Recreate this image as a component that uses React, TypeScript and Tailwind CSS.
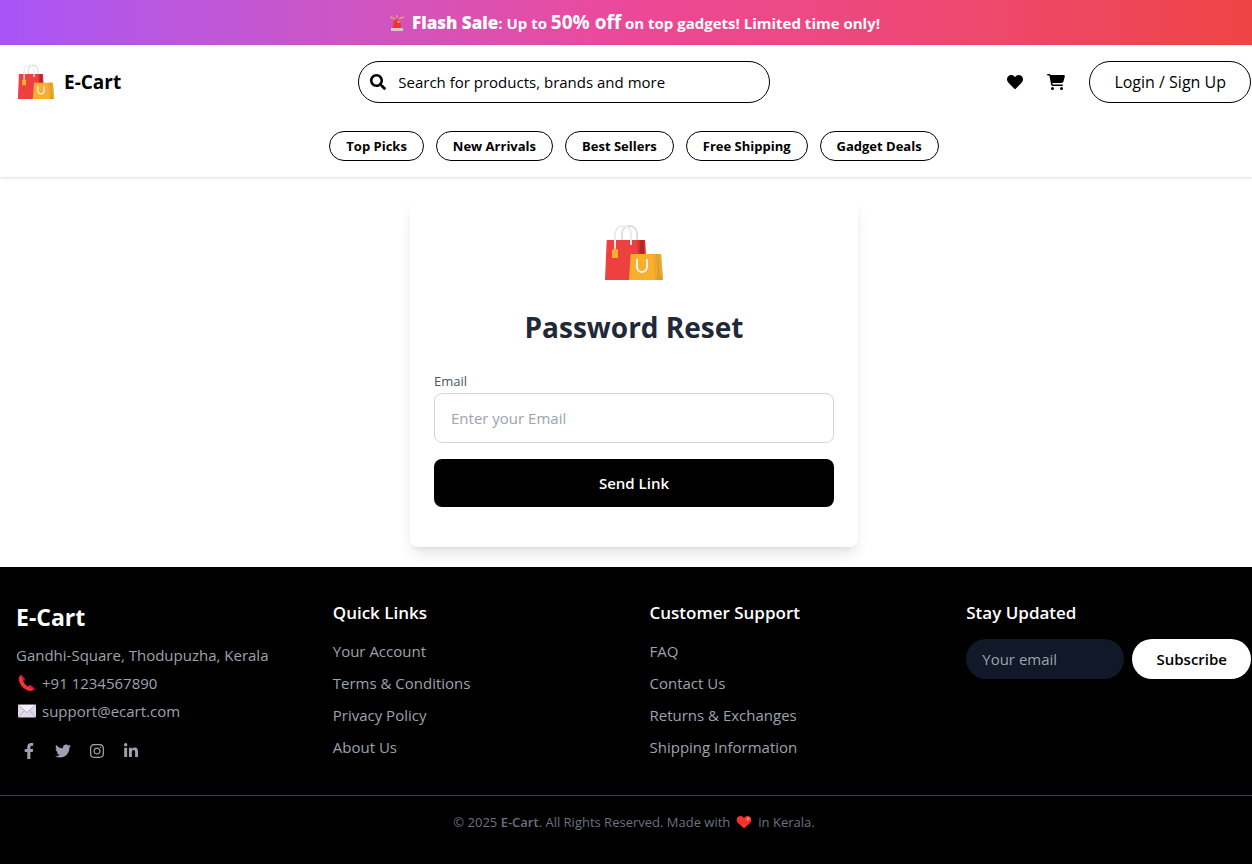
import type { ReactNode } from "react";
import { FaFacebookF, FaHeart, FaInstagram, FaLinkedinIn, FaSearch, FaTwitter } from "react-icons/fa";
import { FaCartShopping } from "react-icons/fa6";

function BagLogo({ className }: { className: string }) {
  return (
    <svg viewBox="0 0 64 64" className={className} role="img" aria-label="E-Cart shopping bags" fill="none">
      <path d="M20 19v-6.500a7.500 7.500 0 0 1 15 0V19" stroke="#dadcde" strokeWidth="1.800" />
      <path d="M4.700 19H43L45 59H3z" fill="#ee413f" />
      <path d="M35.500 19H43L43.700 34H36z" fill="#d63031" />
      <path d="M38.500 19H41.500L42 34H37.500z" fill="#b12a28" />
      <path d="M28.700 33H59L61 59H27z" fill="#f8af2e" />
      <path d="M51.500 33H59L61 59H53z" fill="#eba72e" />
      <path d="M54.500 33H56L58 54L61 59H53L56 54z" fill="#dc9d2c" />
      <path d="M13 28V12.500a8 7.500 0 0 1 16 0V24" stroke="#e8edf1" strokeWidth="2" />
      <path d="M13 27.200L16 29V37H10V29z" fill="#f8af2e" />
      <path d="M35 38V46a5 5 0 0 0 10 0V38" stroke="#f0f0f0" strokeWidth="2" />
    </svg>
  );
}

function SirenIcon() {
  return (
    <svg viewBox="0 0 18 18" className="mr-1.5 size-[18px]" aria-hidden="true">
      <path d="M9 1v3M5 3l1.500 2.500M13 3l-1.500 2.500M2.500 2.500l1.800 2M15.500 2.500l-1.800 2" stroke="#eeb05a" strokeWidth="1.200" />
      <path d="M4.500 14L5.800 7.800Q6.200 5.500 9 5.500T12.200 7.800L13.500 14z" fill="#f8312f" />
      <circle cx="10.500" cy="7.800" r="1" fill="#ffd5cf" />
      <rect x="3" y="14" width="12" height="3" rx=".5" fill="#d3c9ce" />
    </svg>
  );
}

function PhoneIcon() {
  return (
    <svg viewBox="0 0 18 18" className="size-[18px]" aria-hidden="true">
      <path d="M2 1.500Q.5 3 1 6.500Q2.500 13 9 16.300Q13.500 18 16.300 15.500L12 11.500L9.500 12.500Q6 10 5.200 7L6.500 5L3.500 1z" fill="#f8312f" />
      <path d="M3 .8L7 5L6.200 6.800L2.200 2.200zM12.200 10.500L17 14.800L15.800 16L10.800 12z" fill="#ca0b6a" />
    </svg>
  );
}

function EnvelopeIcon() {
  return (
    <svg viewBox="0 0 18 14" className="h-[14px] w-[18px]" aria-hidden="true">
      <rect y=".5" width="18" height="13" rx=".8" fill="#e1d8ec" />
      <path d="M0 1L9 8.500L18 1z" fill="#f3eef8" />
      <path d="M.3 1L9 8.500L17.700 1M.3 13L6.500 6.500M17.700 13L11.500 6.500" fill="none" stroke="#998ea4" strokeWidth=".6" />
    </svg>
  );
}

function HeartEmoji() {
  return (
    <svg viewBox="0 0 16 14" className="mx-1.5 inline h-[14px] w-4 align-[-2px]" aria-hidden="true">
      <path d="M8 13.500L2 8Q0 5.500 1 3Q2.300.8 5 1Q7 1.300 8 3Q9 1.300 11 1Q13.700.8 15 3Q16 5.500 14 8z" fill="#f8312f" />
      <ellipse cx="12" cy="4" rx="1.300" ry="2" transform="rotate(25 12 4)" fill="#ff8a73" />
    </svg>
  );
}

const categories = ["Top Picks", "New Arrivals", "Best Sellers", "Free Shipping", "Gadget Deals"];
const quickLinks = ["Your Account", "Terms & Conditions", "Privacy Policy", "About Us"];
const supportLinks = ["FAQ", "Contact Us", "Returns & Exchanges", "Shipping Information"];
const socials: { name: string; icon: ReactNode }[] = [
  { name: "Facebook", icon: <FaFacebookF /> },
  { name: "Twitter", icon: <FaTwitter /> },
  { name: "Instagram", icon: <FaInstagram /> },
  { name: "LinkedIn", icon: <FaLinkedinIn /> },
];

function LinkColumn({ title, links }: { title: string; links: string[] }) {
  return (
    <nav aria-label={title}>
      <h2 className="mb-3 text-[17px] leading-7 font-semibold text-white">{title}</h2>
      <ul className="space-y-2">
        {links.map((link) => (
          <li key={link}>
            <a href="#">{link}</a>
          </li>
        ))}
      </ul>
    </nav>
  );
}

export default function App() {
  return (
    <div className="flex min-h-screen flex-col bg-white font-['Open_Sans','Noto_Sans',sans-serif] text-[15px] leading-6 text-black">
      <div className="flex h-[45px] items-center justify-center bg-linear-to-r from-[#a855f7] via-[#ec4899] to-[#ef4444] pl-4 font-bold text-white">
        <SirenIcon />
        <p>
          <strong className="text-[17px] font-extrabold">Flash Sale</strong>: Up to{" "}
          <strong className="text-[19px] font-bold">50% off</strong> on top gadgets! Limited time only!
        </p>
      </div>

      <header className="relative bg-white pb-4 shadow-sm">
        <div className="flex items-center justify-between py-4 pr-px pl-4">
          <a href="#" className="flex items-center gap-2 text-[19px] leading-7 font-bold">
            <BagLogo className="size-10" />
            E-Cart
          </a>
          <form role="search" className="flex h-[42px] w-[412px] items-center gap-3 rounded-full border border-black px-[11px]">
            <FaSearch className="size-4 shrink-0" />
            <input
              type="search"
              aria-label="Search products"
              placeholder="Search for products, brands and more"
              className="min-w-0 flex-1 bg-transparent outline-none placeholder:text-black"
            />
          </form>
          <div className="flex items-center">
            <a href="#" aria-label="Wishlist" className="mr-6">
              <FaHeart className="size-4" />
            </a>
            <a href="#" aria-label="Cart" className="mr-6">
              <FaCartShopping className="h-4 w-[18px]" />
            </a>
            <a href="#" className="flex h-[42px] items-center rounded-full border border-black px-6 text-base font-medium">
              Login / Sign Up
            </a>
          </div>
        </div>
        <nav aria-label="Categories" className="mt-3 flex justify-center gap-3 pl-4">
          {categories.map((category) => (
            <a
              key={category}
              href="#"
              className="flex h-[30px] items-center rounded-full border border-black px-4 text-[13px] leading-5 font-bold"
            >
              {category}
            </a>
          ))}
        </nav>
      </header>

      <main className="flex justify-center py-5 pl-4">
        <section className="w-full max-w-md rounded-lg bg-white px-6 pt-6 pb-10 shadow-lg">
          <BagLogo className="mx-auto size-16" />
          <h1 className="mt-6 mb-6 text-center text-[28px] leading-9 font-bold text-[#1f2937]">Password Reset</h1>
          <form>
            <label htmlFor="email" className="block text-[13px] leading-6 text-[#4b5563]">
              Email
            </label>
            <input
              id="email"
              type="email"
              placeholder="Enter your Email"
              className="mb-4 block h-[50px] w-full rounded-lg border border-[#d1d5db] px-4 outline-none placeholder:text-[#9ca3af]"
            />
            <button type="button" className="h-12 w-full rounded-lg bg-black font-semibold text-white">
              Send Link
            </button>
          </form>
        </section>
      </main>

      <footer className="flex-1 bg-black pt-8 text-[#9ca3af]">
        <div className="grid grid-cols-4 gap-8 pr-px pb-9 pl-4">
          <div>
            <h2 className="mb-2 text-[23px] leading-9 font-bold text-white">E-Cart</h2>
            <address className="space-y-1 not-italic">
              <p>Gandhi-Square, Thodupuzha, Kerala</p>
              <p className="flex items-center gap-1.5 pl-[2px]">
                <PhoneIcon />
                +91 1234567890
              </p>
              <p className="flex items-center gap-1.5 pl-[2px]">
                <EnvelopeIcon />
                support@ecart.com
              </p>
            </address>
            <div className="mt-5 flex gap-[18px] pl-[5px] text-base">
              {socials.map(({ name, icon }) => (
                <a key={name} href="#" aria-label={name}>
                  {icon}
                </a>
              ))}
            </div>
          </div>
          <LinkColumn title="Quick Links" links={quickLinks} />
          <LinkColumn title="Customer Support" links={supportLinks} />
          <div>
            <h2 className="mb-3 text-[17px] leading-7 font-semibold text-white">Stay Updated</h2>
            <form className="flex gap-2">
              <input
                type="email"
                aria-label="Your email"
                placeholder="Your email"
                className="h-10 min-w-0 flex-1 rounded-full bg-[#111827] px-4 outline-none placeholder:text-[#9ca3af]"
              />
              <button type="button" className="h-10 rounded-full bg-white px-6 font-semibold text-black">
                Subscribe
              </button>
            </form>
          </div>
        </div>
        <p className="border-t border-[#374151] pt-4 pl-4 text-center text-[13px] leading-5 text-[#6b7280]">
          © 2025 <span className="font-semibold">E-Cart</span>. All Rights Reserved. Made with
          <HeartEmoji />
          in Kerala.
        </p>
      </footer>
    </div>
  );
}
